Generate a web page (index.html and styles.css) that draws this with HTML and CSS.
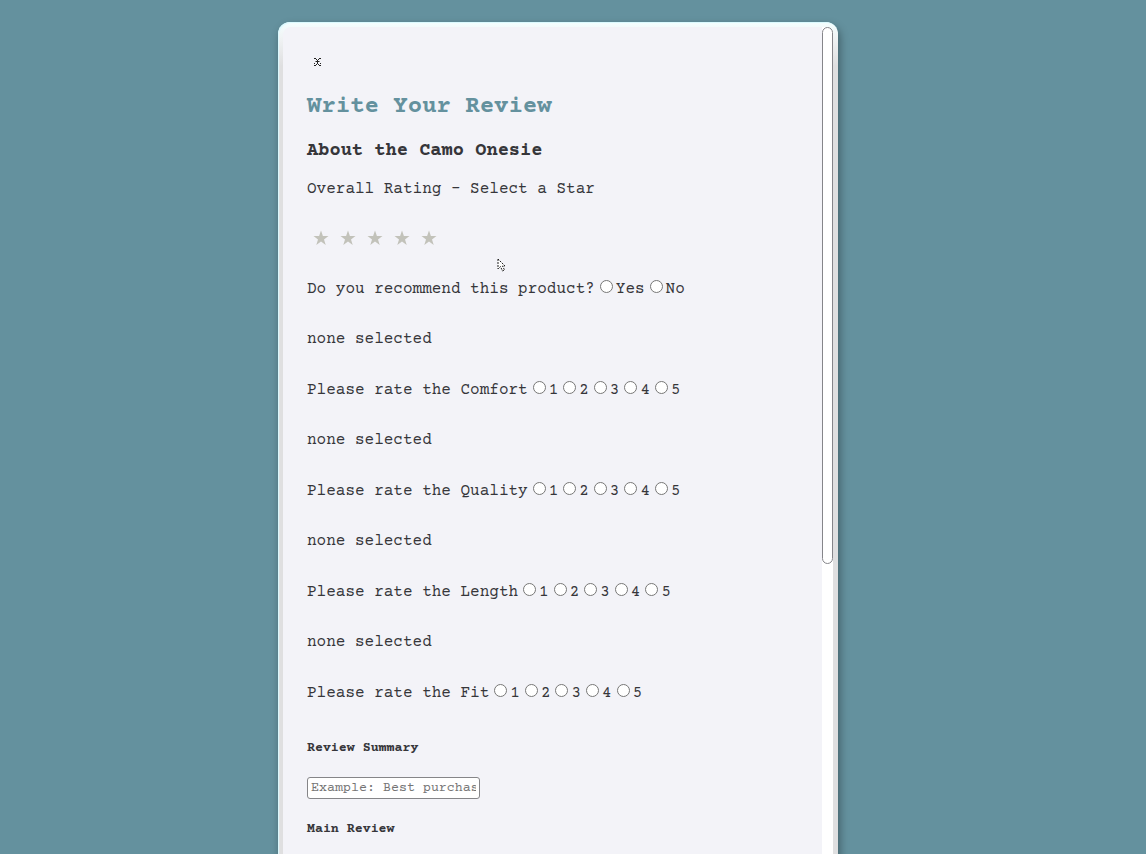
FILE: index.html
```html
<!DOCTYPE html>
<html lang="en">
<head>
<meta charset="utf-8">
<meta name="viewport" content="width=device-width, initial-scale=1">
<title>Write Your Review</title>
<link rel="stylesheet" href="styles.css">
</head>
<body>
<main class="modal">
  <form class="form">
    <svg class="caret-mark" viewBox="0 0 7 8" aria-hidden="true"><path d="M0 .5h2M5 .5h2M2 1.500h1M4 1.500h1M3.500 2v4M1.500 3.500h4M2 6.500h1M4 6.500h1M0 7.500h2M5 7.500h2M.5 5v1M6.500 5v1" stroke="#222" fill="none"/></svg>
    <h2 class="title">Write Your Review</h2>
    <h3 class="subtitle">About the Camo Onesie</h3>
    <p class="lead">Overall Rating – Select a Star</p>
    <div class="stars">
      <button class="star" type="button" aria-label="1 star"><svg viewBox="0 0 16 16"><path d="M8 .5 9.900 6H15.500L11 9.400 12.700 15 8 11.600 3.300 15 5 9.400.5 6H6.100Z"/></svg></button>
      <button class="star" type="button" aria-label="2 stars"><svg viewBox="0 0 16 16"><path d="M8 .5 9.900 6H15.500L11 9.400 12.700 15 8 11.600 3.300 15 5 9.400.5 6H6.100Z"/></svg></button>
      <button class="star" type="button" aria-label="3 stars"><svg viewBox="0 0 16 16"><path d="M8 .5 9.900 6H15.500L11 9.400 12.700 15 8 11.600 3.300 15 5 9.400.5 6H6.100Z"/></svg></button>
      <button class="star" type="button" aria-label="4 stars"><svg viewBox="0 0 16 16"><path d="M8 .5 9.900 6H15.500L11 9.400 12.700 15 8 11.600 3.300 15 5 9.400.5 6H6.100Z"/></svg></button>
      <button class="star" type="button" aria-label="5 stars"><svg viewBox="0 0 16 16"><path d="M8 .5 9.900 6H15.500L11 9.400 12.700 15 8 11.600 3.300 15 5 9.400.5 6H6.100Z"/></svg></button>
    </div>
    <div class="question" role="radiogroup" aria-labelledby="q-rec"><span id="q-rec">Do you recommend this product?</span><label><input type="radio" name="rec">Yes</label><label><input type="radio" name="rec">No</label></div>
    <p class="note">none selected</p>
    <div class="question" role="radiogroup" aria-labelledby="q-comfort"><span id="q-comfort">Please rate the Comfort</span><label><input type="radio" name="comfort">1</label><label><input type="radio" name="comfort">2</label><label><input type="radio" name="comfort">3</label><label><input type="radio" name="comfort">4</label><label><input type="radio" name="comfort">5</label></div>
    <p class="note">none selected</p>
    <div class="question" role="radiogroup" aria-labelledby="q-quality"><span id="q-quality">Please rate the Quality</span><label><input type="radio" name="quality">1</label><label><input type="radio" name="quality">2</label><label><input type="radio" name="quality">3</label><label><input type="radio" name="quality">4</label><label><input type="radio" name="quality">5</label></div>
    <p class="note">none selected</p>
    <div class="question" role="radiogroup" aria-labelledby="q-length"><span id="q-length">Please rate the Length</span><label><input type="radio" name="length">1</label><label><input type="radio" name="length">2</label><label><input type="radio" name="length">3</label><label><input type="radio" name="length">4</label><label><input type="radio" name="length">5</label></div>
    <p class="note">none selected</p>
    <div class="question" role="radiogroup" aria-labelledby="q-fit"><span id="q-fit">Please rate the Fit</span><label><input type="radio" name="fit">1</label><label><input type="radio" name="fit">2</label><label><input type="radio" name="fit">3</label><label><input type="radio" name="fit">4</label><label><input type="radio" name="fit">5</label></div>
    <h5 class="field-title"><label for="summary">Review Summary</label></h5>
    <input class="summary" id="summary" type="text" placeholder="Example: Best purchase ever!">
    <h5 class="field-title">Main Review</h5>
    <svg class="pointer" viewBox="0 0 10 15" aria-hidden="true"><path d="M1 1v10l2.500-2.500L5.500 13l2-1-2-4H8Z" fill="#fff" stroke="#222" stroke-dasharray="2 1"/></svg>
  </form>
  <div class="track" aria-hidden="true"><div class="thumb"></div></div>
</main>
</body>
</html>
```
FILE: styles.css
```css
* {
  box-sizing: border-box;
}

body {
  margin: 0;
  height: 100vh;
  overflow: hidden;
  padding: 22px 30px 0 0;
  background: #64919e;
  color: #36363a;
  font: 16px/20px "Courier Prime", "Liberation Mono", monospace;
}

.modal {
  display: flex;
  max-width: 560px;
  min-height: 100vh;
  margin: 0 auto;
  padding: 5px;
  border-radius: 12px;
  background: linear-gradient(#f4ffff, #f0f3f4 16px, #dfdfe0 44px);
  box-shadow: inset 1px 1px 1px #d9faff, 2px 4px 8px rgba(0, 0, 0, 0.35);
}

.form {
  position: relative;
  flex: 1;
  min-width: 0;
  padding: 66px 24px 24px;
  border-radius: 8px 0 0 8px;
  background: #f3f3f8;
}

.title,
.subtitle,
.lead,
.note,
.field-title {
  margin: 0;
}

.title {
  color: #64919e;
  font-size: 24px;
  line-height: 28px;
}

.subtitle {
  margin-top: 19px;
  line-height: 22px;
}

.lead {
  margin-top: 17px;
}

.stars {
  display: flex;
  align-items: center;
  gap: 11px;
  height: 50px;
  margin-top: 14px;
  margin-bottom: 1px;
  padding-left: 6px;
}

.star {
  width: 16px;
  height: 16px;
  padding: 0;
  border: 0;
  background: none;
}

.star svg {
  display: block;
  fill: #c2c2ba;
}

.question {
  line-height: 50px;
  white-space: nowrap;
}

.note {
  line-height: 51px;
}

.field-title {
  margin-top: 23px;
  line-height: 16px;
}

.summary {
  display: block;
  width: 173px;
  height: 22px;
  margin-top: 20px;
  padding: 1px 3px;
  border: 1px solid #858588;
  border-radius: 3px;
  background: #fff;
  font-family: inherit;
}

.summary::placeholder {
  color: #757575;
}

.track {
  flex: none;
  width: 11px;
  border-radius: 0 8px 0 0;
  background: #fff;
}

.thumb {
  height: 537px;
  border: 1px solid #85858a;
  border-radius: 6px;
  background: #fff;
}

.caret-mark {
  position: absolute;
  top: 31px;
  left: 31px;
  width: 7px;
  height: 8px;
}

.pointer {
  position: absolute;
  top: 231px;
  left: 214px;
  width: 10px;
  height: 15px;
}
```
